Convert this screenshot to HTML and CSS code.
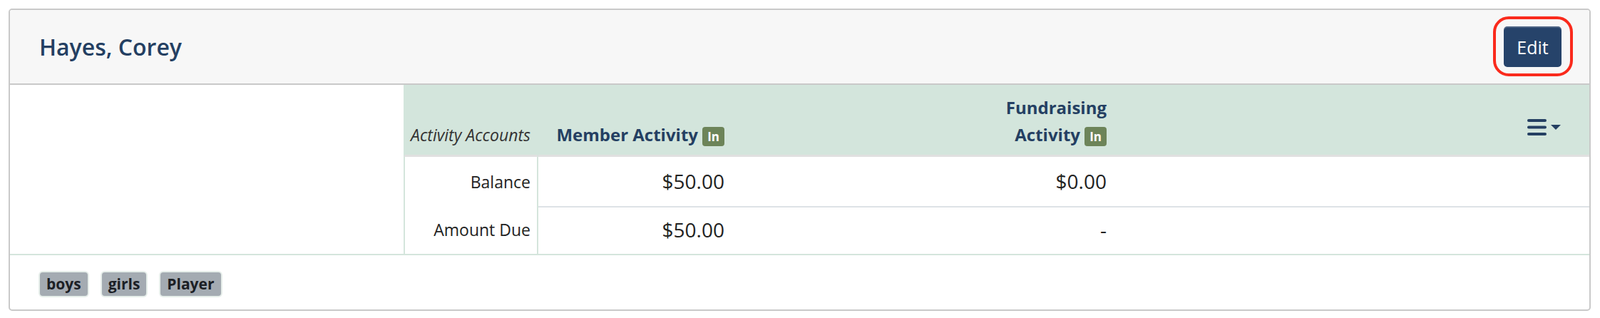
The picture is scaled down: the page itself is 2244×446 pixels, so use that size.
FILE: index.html
```html
<!DOCTYPE html>
<html lang="en">
<head>
<meta charset="utf-8">
<title>Hayes, Corey</title>
<link rel="stylesheet" href="styles.css">
</head>
<body>
<div class="card">
  <div class="card-header">
    <h2 class="name">Hayes, Corey</h2>
    <div class="edit-wrap"><button class="btn-edit" type="button">Edit</button></div>
  </div>
  <div class="card-body">
    <div class="spacer"></div>
    <table class="accounts">
      <colgroup>
        <col class="c-label">
        <col class="c-member">
        <col class="c-fund">
        <col class="c-menu">
      </colgroup>
      <thead>
        <tr>
          <th class="th-label">Activity Accounts</th>
          <th class="th-acct">Member Activity <span class="badge-in">In</span></th>
          <th class="th-acct"><span class="wrap">Fundraising Activity <span class="badge-in">In</span></span></th>
          <th class="th-menu">
            <span class="menu-btn">
              <svg class="bars" width="27" height="23" viewBox="0 0 27 23"><rect x="0" y="0" width="27" height="4" rx="2"/><rect x="0" y="9.5" width="27" height="4" rx="2"/><rect x="0" y="19" width="27" height="4" rx="2"/></svg>
              <svg class="caret" width="14" height="7" viewBox="0 0 14 7"><polygon points="0,0 14,0 7,7"/></svg>
            </span>
          </th>
        </tr>
      </thead>
      <tbody>
        <tr class="row-first">
          <td class="label">Balance</td>
          <td class="amt">$50.00</td>
          <td class="amt">$0.00</td>
          <td class="fill"></td>
        </tr>
        <tr class="row-last">
          <td class="label">Amount Due</td>
          <td class="amt">$50.00</td>
          <td class="amt">-</td>
          <td class="fill"></td>
        </tr>
      </tbody>
    </table>
  </div>
  <div class="card-footer">
    <span class="tag">boys</span>
    <span class="tag">girls</span>
    <span class="tag">Player</span>
  </div>
</div>
</body>
</html>
```

FILE: styles.css
```css
* { box-sizing: border-box; }

body {
  margin: 0;
  padding: 12px 13px 0 12px;
  background: #ffffff;
  font-family: "Open Sans", "Liberation Sans", sans-serif;
}

.card {
  border: 2px solid #c9c9c9;
  border-radius: 5px;
  background: #ffffff;
}

.card-header {
  height: 105px;
  display: flex;
  align-items: center;
  justify-content: space-between;
  padding: 0 39px 0 41px;
  background: #f7f7f7;
  border-bottom: 2px solid #c9c9c9;
  border-radius: 3px 3px 0 0;
}

.name {
  margin: 0;
  font-size: 32px;
  font-weight: 600;
  color: #243f62;
  line-height: 1.3;
}

.edit-wrap { position: relative; }

.edit-wrap::after {
  content: "";
  position: absolute;
  left: -15px;
  right: -16px;
  top: -14px;
  bottom: -13px;
  border: 4px solid #fa2a1c;
  border-radius: 22px;
  pointer-events: none;
}

.btn-edit {
  display: block;
  width: 81px;
  height: 57px;
  padding: 0;
  border: 0;
  border-radius: 5px;
  background: #26436a;
  color: #ffffff;
  font-family: inherit;
  font-size: 25px;
  box-shadow: inset 0 2px 0 rgba(255, 255, 255, 0.18);
}

.card-body {
  display: grid;
  grid-template-columns: 552px 1fr;
  border-bottom: 2px solid #d4e5dc;
}

.accounts {
  width: 100%;
  table-layout: fixed;
  border-collapse: separate;
  border-spacing: 0;
}

.c-label { width: 189px; }
.c-member { width: 273px; }
.c-fund { width: 536px; }

.accounts th {
  height: 101px;
  background: #d3e5dc;
  border-bottom: 3px solid #e0e0e0;
  vertical-align: bottom;
  padding: 0 12px 9px;
  line-height: 38px;
}

.th-label {
  text-align: left;
  padding-left: 8px !important;
  font-size: 23px;
  font-style: italic;
  font-weight: 400;
  color: #333333;
  border-left: 2px solid #d3e5dc;
  border-right: 2px solid #d3e5dc;
  white-space: nowrap;
}

.th-acct {
  text-align: right;
  font-size: 24px;
  font-weight: 700;
  color: #243f62;
}

.wrap {
  display: inline-block;
  max-width: 150px;
  text-align: right;
}

.badge-in {
  display: inline-block;
  height: 27px;
  line-height: 27px;
  padding: 0 7px;
  border-radius: 4px;
  background: #6d8459;
  color: #ffffff;
  font-size: 17px;
  font-weight: 700;
  font-style: normal;
}

.th-menu {
  text-align: right;
  padding: 0 40px 27px 0 !important;
}

.menu-btn {
  display: inline-flex;
  align-items: center;
  gap: 6px;
  vertical-align: bottom;
}

.bars, .caret { display: block; fill: #243f62; }

.accounts td {
  vertical-align: middle;
  color: #222222;
}

.row-first td { height: 71px; border-bottom: 2px solid #dee2e6; }
.row-last td { height: 65px; padding-bottom: 3px !important; }

.accounts td.label {
  text-align: right;
  padding-top: 0;
  padding-right: 9px;
  padding-left: 0;
  font-size: 23px;
  border-left: 2px solid #d4e5dc;
  border-right: 2px solid #d4e5dc;
  border-bottom: 0;
  white-space: nowrap;
}

.amt {
  text-align: right;
  padding-top: 0;
  padding-right: 12px;
  padding-left: 0;
  font-size: 28px;
}

.card-footer {
  display: flex;
  gap: 20px;
  padding: 24px 42px 19px;
}

.tag {
  height: 33px;
  line-height: 33px;
  padding: 0 9px;
  border-radius: 4px;
  background: #a4abb2;
  color: #1c2025;
  font-size: 21px;
  font-weight: 700;
  box-shadow: 0 0 0 2px #e6eeea;
}
```
